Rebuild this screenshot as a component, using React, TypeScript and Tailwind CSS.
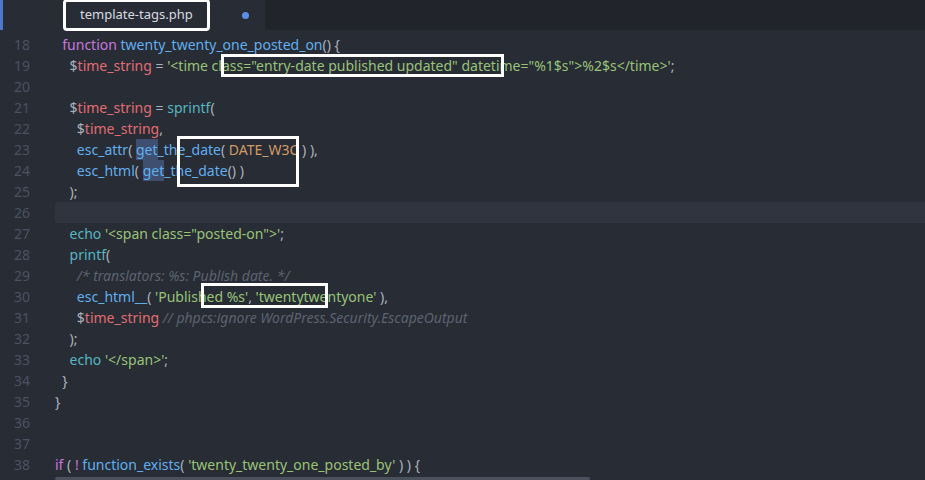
const C = {
  kw: "text-[#c678dd]",
  fn: "text-[#61afef]",
  vr: "text-[#e06c75]",
  st: "text-[#98c379]",
  ct: "text-[#d19a66]",
  cm: "text-[#5c6370] italic",
  pl: "text-[#abb2bf]",
  ec: "text-[#56b6c2]",
};

type Tok = [string, string];

const lines: { n: number; toks: Tok[] }[] = [
  { n: 18, toks: [["  ", C.pl], ["function ", C.kw], ["twenty_twenty_one_posted_on", C.fn], ["() {", C.pl]] },
  { n: 19, toks: [["    ", C.pl], ["$", C.pl], ["time_string", C.vr], [" = ", C.pl], ["'<time class=\"entry-date published updated\" datetime=\"%1$s\">%2$s</time>'", C.st], [";", C.pl]] },
  { n: 20, toks: [] },
  { n: 21, toks: [["    ", C.pl], ["$", C.pl], ["time_string", C.vr], [" = ", C.pl], ["sprintf", C.ec], ["(", C.pl]] },
  { n: 22, toks: [["      ", C.pl], ["$", C.pl], ["time_string", C.vr], [",", C.pl]] },
  { n: 23, toks: [["      ", C.pl], ["esc_attr", C.fn], ["( ", C.pl], ["SEL", C.fn], ["_the_date", C.fn], ["( ", C.pl], ["DATE_W3C", C.ct], [" ) ),", C.pl]] },
  { n: 24, toks: [["      ", C.pl], ["esc_html", C.fn], ["( ", C.pl], ["SEL", C.fn], ["_the_date", C.fn], ["() )", C.pl]] },
  { n: 25, toks: [["    );", C.pl]] },
  { n: 26, toks: [] },
  { n: 27, toks: [["    ", C.pl], ["echo ", C.ec], ["'<span class=\"posted-on\">'", C.st], [";", C.pl]] },
  { n: 28, toks: [["    ", C.pl], ["printf", C.ec], ["(", C.pl]] },
  { n: 29, toks: [["      ", C.pl], ["/* translators: %s: Publish date. */", C.cm]] },
  { n: 30, toks: [["      ", C.pl], ["esc_html__", C.fn], ["( ", C.pl], ["'Published %s'", C.st], [", ", C.pl], ["'twentytwentyone'", C.st], [" ),", C.pl]] },
  { n: 31, toks: [["      ", C.pl], ["$", C.pl], ["time_string", C.vr], [" // phpcs:ignore WordPress.Security.EscapeOutput", C.cm]] },
  { n: 32, toks: [["    );", C.pl]] },
  { n: 33, toks: [["    ", C.pl], ["echo ", C.ec], ["'</span>'", C.st], [";", C.pl]] },
  { n: 34, toks: [["  }", C.pl]] },
  { n: 35, toks: [["}", C.pl]] },
  { n: 36, toks: [] },
  { n: 37, toks: [] },
  { n: 38, toks: [["if", C.kw], [" ( ", C.pl], ["!", C.kw], [" ", C.pl], ["function_exists", C.fn], ["( ", C.pl], ["'twenty_twenty_one_posted_by'", C.st], [" ) ) {", C.pl]] },
];

export default function App() {
  return (
    <div className="relative h-[480px] w-[925px] overflow-hidden bg-[#282c34] text-[14px]">
      {/* tab bar */}
      <div className="flex h-[30px] bg-[#21252b]">
        <div className="w-[3px] bg-[#4d78cc]" />
        <div className="flex w-[262px] items-center bg-[#282c34] pl-[63px] pr-[12px]">
          <span className="rounded-[1px] px-[14px] py-[3px] font-['Liberation_Sans'] text-[13px] text-[#d7dae0] outline outline-[3px] outline-white">
            template-tags.php
          </span>
          <span className="ml-auto mr-[4px] size-[7px] rounded-full bg-[#5a8fe8]" />
        </div>
      </div>

      {/* code */}
      <div className="pt-[3.5px] font-['DejaVu_Sans_Mono']">
        {lines.map((l) => (
          <div key={l.n} className="flex h-[21px] items-center">
            <span className="w-[55px] shrink-0 pl-[14px] text-[#4b5263]">{l.n}</span>
            <span
              className={`flex h-full flex-1 items-center whitespace-pre ${l.n === 26 ? "rounded-l-[3px] bg-[#2f343e]" : ""}`}
            >
              {l.toks.map(([t, c], i) =>
                t === "SEL" ? (
                  <span key={i} className={`${c} bg-[#3e4f70]`}>
                    get
                  </span>
                ) : (
                  <span key={i} className={c}>
                    {t}
                  </span>
                ),
              )}
            </span>
          </div>
        ))}
      </div>

      {/* annotation boxes */}
      <div className="absolute left-[221px] top-[54px] h-[23px] w-[283px] border-[3px] border-white" />
      <div className="absolute left-[177px] top-[136px] h-[51px] w-[122px] border-[3px] border-white" />
      <div className="absolute left-[201px] top-[283px] h-[25px] w-[127px] border-[3px] border-white" />

      {/* scrollbar */}
      <div className="absolute bottom-0 left-[55px] h-[3px] w-[535px] rounded bg-[#4a505c]" />
    </div>
  );
}
